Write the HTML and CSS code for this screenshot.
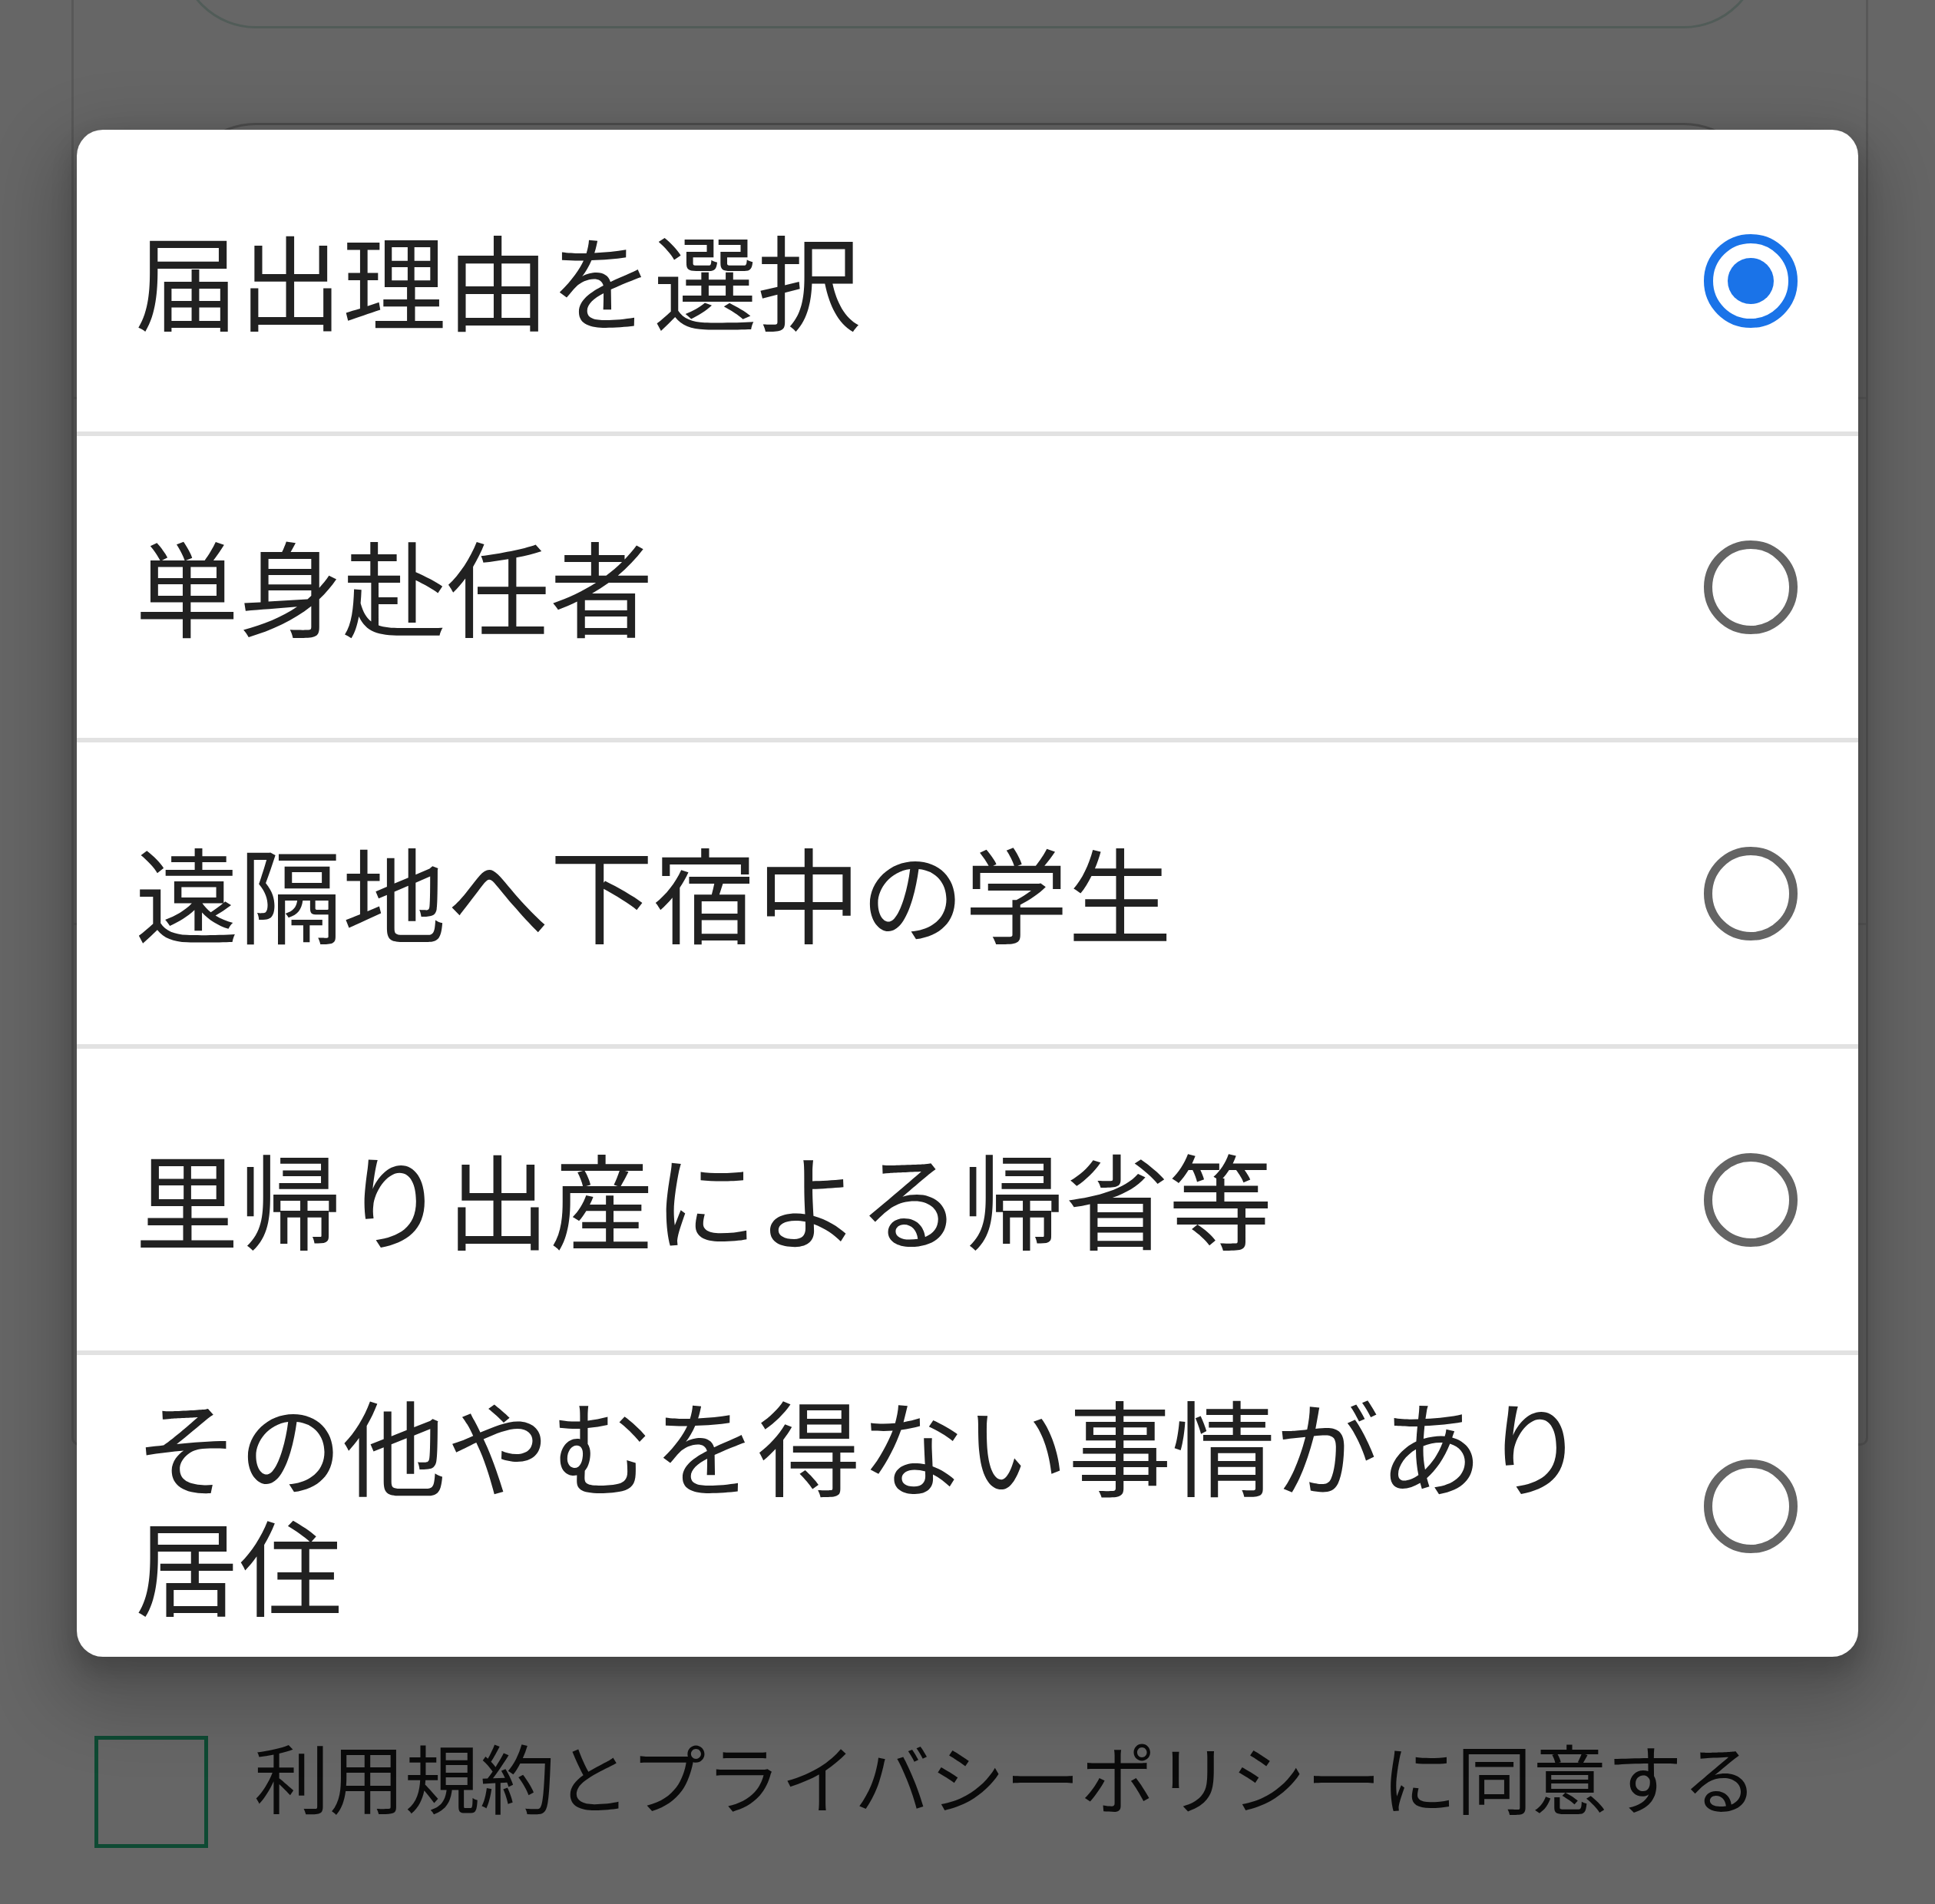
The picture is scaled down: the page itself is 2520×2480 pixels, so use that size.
FILE: index.html
```html
<!DOCTYPE html>
<html lang="ja">
<head>
<meta charset="utf-8">
<title>届出理由を選択</title>
<link rel="stylesheet" href="styles.css">
</head>
<body>
<div class="page">
  <div class="card">
    <div class="field field-top"></div>
    <div class="field field-second"></div>
    <div class="rule rule-one"></div>
    <div class="rule rule-two"></div>
  </div>
  <div class="agree">
    <div class="checkbox"></div>
    <div class="agree-text">利用規約とプライバシーポリシーに同意する</div>
  </div>

  <div class="dialog">
    <div class="option">
      <div class="label">届出理由を選択</div>
      <div class="radio checked"><div class="dot"></div></div>
    </div>
    <div class="option">
      <div class="label">単身赴任者</div>
      <div class="radio"></div>
    </div>
    <div class="option">
      <div class="label">遠隔地へ下宿中の学生</div>
      <div class="radio"></div>
    </div>
    <div class="option">
      <div class="label">里帰り出産による帰省等</div>
      <div class="radio"></div>
    </div>
    <div class="option">
      <div class="label">その他やむを得ない事情があり居住</div>
      <div class="radio"></div>
    </div>
  </div>
</div>
</body>
</html>
```

FILE: styles.css
```css
html, body {
  margin: 0;
  padding: 0;
  background: #666666;
}

body {
  font-family: "Noto Sans CJK JP", "Noto Sans", sans-serif;
  width: 2520px;
  height: 2480px;
  overflow: hidden;
}

.page {
  position: relative;
  width: 2520px;
  height: 2480px;
  background: #666666;
}

/* underlying page, dimmed by the scrim */
.card {
  box-sizing: border-box;
  margin-left: 93px;
  width: 2340px;
  height: 1883px;
  border-left: 3px solid #585858;
  border-right: 3px solid #585858;
  border-bottom: 3px solid #5a5a5a;
  border-radius: 0 0 10px 10px;
  padding: 0 137px;
  overflow: hidden;
}

.field {
  box-sizing: border-box;
  height: 200px;
  border: 3px solid #515c58;
  border-radius: 100px;
}

.field-top {
  margin-top: -163px;
}

.field-second {
  margin-top: 123px;
  border-color: #4e4e4e;
}

.rule {
  height: 3px;
  background: #5d5d5d;
  margin-left: -137px;
  margin-right: -137px;
}

.rule-one {
  margin-top: 157px;
}

.rule-two {
  margin-top: 682px;
}

.agree {
  display: flex;
  align-items: flex-start;
  margin-top: 378px;
  margin-left: 123px;
}

.checkbox {
  box-sizing: border-box;
  width: 148px;
  height: 146px;
  border: 5px solid #0e4a33;
  flex: none;
}

.agree-text {
  margin-left: 60px;
  margin-top: 2px;
  font-size: 98px;
  line-height: 1;
  color: #0a0a0a;
  white-space: nowrap;
}

/* dialog */
.dialog {
  position: absolute;
  top: 169px;
  left: 100px;
  width: 2320px;
  background: #ffffff;
  border-radius: 34px;
  overflow: hidden;
  box-shadow:
    0 40px 90px 30px rgba(0, 0, 0, 0.2),
    0 16px 30px 4px rgba(0, 0, 0, 0.16);
}

.option {
  box-sizing: border-box;
  display: flex;
  align-items: center;
  height: 393px;
  padding: 0 79px 0 76px;
}

.option + .option {
  height: 399px;
  border-top: 6px solid #e2e2e2;
}

.label {
  flex: 1;
  min-width: 0;
  font-size: 135px;
  line-height: 156px;
  color: #212121;
  padding-bottom: 8px;
}

.radio {
  box-sizing: border-box;
  flex: none;
  width: 122px;
  height: 122px;
  margin-left: 40px;
  border: 11px solid #646464;
  border-radius: 50%;
  display: flex;
  align-items: center;
  justify-content: center;
}

.radio.checked {
  border: 12px solid #1a73e8;
}

.dot {
  width: 60px;
  height: 60px;
  border-radius: 50%;
  background: #1a73e8;
}
```
